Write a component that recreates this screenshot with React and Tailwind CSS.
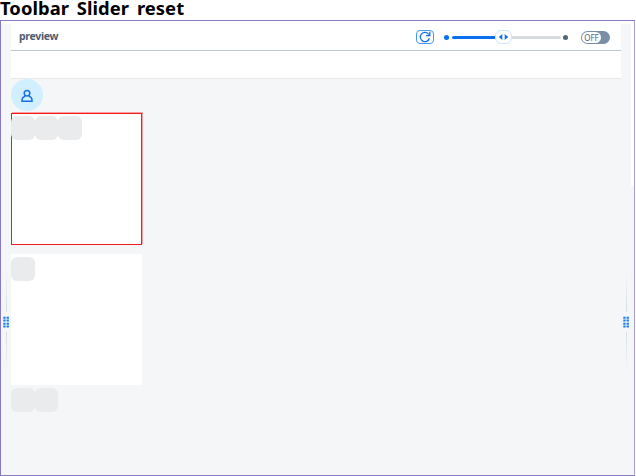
function Grip({ className }) {
  return (
    <div className={`flex w-1.5 flex-col items-center gap-1 ${className}`}>
      <div className="h-10 w-px bg-gradient-to-b from-transparent to-[#dadde0]" />
      <svg className="block shrink-0" width="6" height="12" viewBox="0 0 6 12">
        <path
          fill="#1a7cf0"
          d="M.3 .8h2.3v2H.3zM3.6.8h2.3v2H3.6zM.3 3.5h2.3v2H.3zM3.6 3.5h2.3v2H3.6zM.3 6.8h2.3v2H.3zM3.6 6.8h2.3v2H3.6zM.3 9.5h2.3v2H.3zM3.6 9.5h2.3v2H3.6z"
        />
      </svg>
      <div className="h-10 w-px bg-gradient-to-b from-[#dadde0] to-transparent" />
    </div>
  );
}

function Tiles({ count }) {
  return (
    <div className="flex">
      {Array.from({ length: count }, (_, i) => (
        <div key={i} className="h-6 w-[23.7px] rounded-md bg-[#eaebed]" />
      ))}
    </div>
  );
}

function Toolbar() {
  return (
    <header className="flex h-[27px] shrink-0 items-center border-b border-[#bcc6d0] bg-white pl-2 pr-[11px]">
      <span className="-mt-[2px] text-[10.5px] leading-4 font-bold tracking-[-0.3px] text-[#4c5c70]">preview</span>
      <button className="ml-auto flex h-3.5 w-[18px] items-center justify-center rounded-[4px] border border-[#4a96f0] bg-[#fafdff]">
        <svg width="12" height="12" viewBox="0 0 12 12" fill="none" stroke="#1570e8" strokeWidth="1.3">
          <path d="M10.4 7.3A4.6 4.6 0 1 1 9.8 3.5M10.8 .8v3.8H7" />
        </svg>
      </button>
      <div className="ml-[10px] flex w-[124px] items-center">
        <div className="size-[5px] shrink-0 rounded-full bg-[#0a70ed]" />
        <div className="ml-[3px] h-[3px] w-[43px] shrink-0 rounded-l-full bg-[#0a70ed]" />
        <div className="flex h-3.5 w-[17px] shrink-0 items-center justify-center rounded-[6px] border border-[#cce5fb] bg-white">
          <svg width="11" height="6" viewBox="0 0 11 6" fill="#0a70ed">
            <path d="M4.3 .1v5.8L.8 3zM6.7 .1v5.8L10.2 3z" />
          </svg>
        </div>
        <div className="h-[3px] w-[49px] shrink-0 rounded-r-full bg-[#d7dce0]" />
        <div className="ml-[2px] size-[5px] shrink-0 rounded-full bg-[#52657a]" />
      </div>
      <div className="ml-[13px] flex h-[13px] w-[29px] items-center rounded-full bg-[#788fa6] p-px">
        <span className="flex h-[11px] w-[19px] items-center justify-center rounded-full bg-white text-[8px] leading-[11px] text-[#4f6275]">OFF</span>
      </div>
    </header>
  );
}

export default function App() {
  return (
    <div className="flex h-[476px] w-[636px] flex-col overflow-hidden bg-white font-['Noto_Sans',sans-serif]">
      <h1 className="-mt-1 h-6 shrink-0 text-[18.4px] leading-6 font-bold tracking-[0.05px] whitespace-nowrap text-black [word-spacing:3px]">Toolbar Slider reset</h1>
      <main className="flex h-[456px] w-[635px] border border-[#8878c8] border-r-[#aaa0dc] bg-[#f4f6f8]">
        <div className="flex w-[10px] shrink-0 flex-col">
          <div className="h-[3px] bg-white" />
          <Grip className="ml-[2px] mt-[248px]" />
        </div>
        <section className="flex w-[610px] flex-col">
          <div className="h-[3px] shrink-0 bg-white" />
          <Toolbar />
          <div className="h-7 shrink-0 border-b border-[#e7e8ea] bg-white" />
          <div className="flex size-8 shrink-0 items-center justify-center rounded-full bg-[#d1efff]">
            <svg className="mt-0.5" width="13" height="14" viewBox="0 0 13 14" fill="none" stroke="#1870e8" strokeWidth="1.5">
              <circle cx="6" cy="4.3" r="2.8" />
              <path d="M4.3 7.1C2.2 7.8 1 9 1 11v1.2h10V11c0-2-1.2-3.2-3.3-3.9" />
            </svg>
          </div>
          <div className="mt-[2px] h-[132px] w-[131px] shrink-0 border border-[#f51b1b] bg-white pt-[2px] shadow-[1px_-1px_0_0_#f8a0a0]">
            <div className="-ml-px"><Tiles count={3} /></div>
          </div>
          <div className="mt-[9px] h-[131px] w-[131px] shrink-0 bg-white pt-[3px]">
            <Tiles count={1} />
          </div>
          <div className="mt-[2.5px]"><Tiles count={2} /></div>
        </section>
        <div className="flex w-[10px] shrink-0 flex-col">
          <div className="h-[3px] bg-white" />
          <Grip className="ml-[2px] mt-[248px]" />
        </div>
        <div className="h-[165px] w-[3px] bg-white" />
      </main>
    </div>
  );
}
